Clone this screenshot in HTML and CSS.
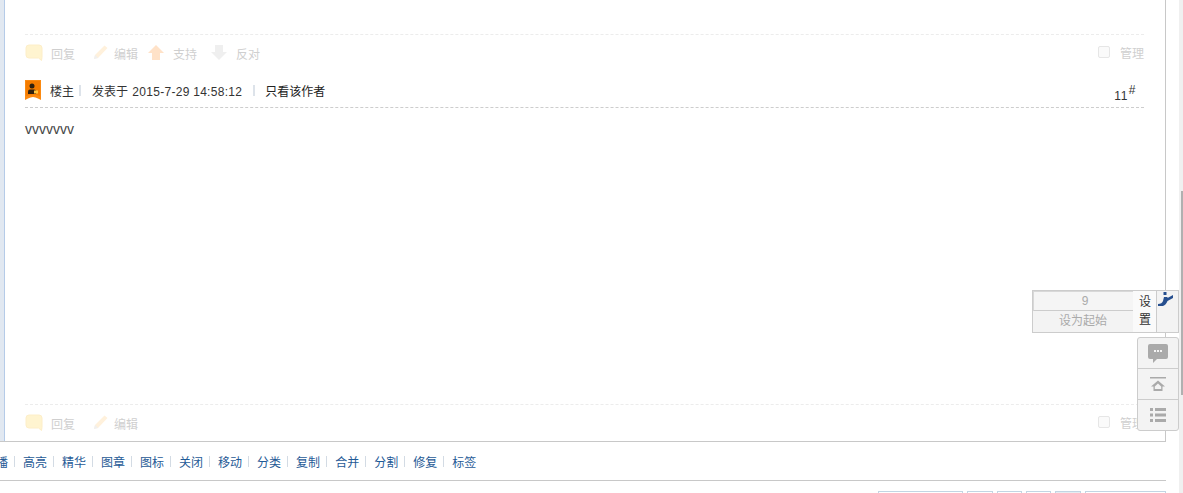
FILE: index.html
```html
<!DOCTYPE html>
<html lang="en">
<head>
    <meta charset="UTF-8">
    <title>帖子</title>
    <link rel="stylesheet" href="styles.css">
</head>
<body>
    <div class="thread">
        <div class="strip"></div>
        <div class="thread-main">
            <div class="post-foot first">
                <span class="act act-reply">
                    <svg class="ico" width="18" height="17" viewBox="0 0 18 17"><path d="M4 1h10a3 3 0 0 1 3 3v9.500l-.5 3-3-2.500H4a3 3 0 0 1-3-3V4a3 3 0 0 1 3-3z" fill="#fff4d0" stroke="#fdeec8"/></svg>
                    回复
                </span>
                <span class="act act-edit">
                    <svg class="ico" width="16" height="16" viewBox="0 0 16 16"><path d="M11.500 1.500l3 2.500L5 14l-4 1 1-4z" fill="#fff1dc"/><path d="M1 15l1-4 3 3z" fill="#f0f0f0"/></svg>
                    编辑
                </span>
                <span class="act act-up">
                    <svg class="ico" width="16" height="15" viewBox="0 0 16 15"><path d="M8 0l8 8h-4v7H4V8H0z" fill="#ffe2c8"/></svg>
                    支持
                </span>
                <span class="act act-down">
                    <svg class="ico" width="16" height="15" viewBox="0 0 16 15"><path d="M8 15l8-8h-4V0H4v7H0z" fill="#efefef"/></svg>
                    反对
                </span>
                <span class="manage"><i class="check"></i>管理</span>
            </div>

            <div class="post-head">
                <svg class="badge" width="16" height="20" viewBox="0 0 16 20">
                    <path d="M0 0h16v20l-3-1.500q-5-3-10 0L0 20z" fill="#fb8a12"/>
                    <path d="M1 1h14v15q-7-3-14 0z" fill="#f57c00"/>
                    <circle cx="7" cy="6" r="2.500" fill="#30200f"/>
                    <path d="M3 14v-2.500q0-2 2-2h4q2 0 2 2V14z" fill="#30200f"/>
                    <rect x="9" y="10.500" width="4" height="3" fill="#ffc640"/>
                </svg>
                <span class="author">楼主</span>
                <i class="pipe pipe-a"></i>
                <span class="posted">发表于 <span class="date">2015-7-29 14:58:12</span></span>
                <i class="pipe pipe-b"></i>
                <a class="only">只看该作者</a>
                <span class="floor">11<sup>#</sup></span>
            </div>

            <div class="post-body">vvvvvvv</div>

            <div class="post-foot">
                <span class="act act-reply">
                    <svg class="ico" width="18" height="17" viewBox="0 0 18 17"><path d="M4 1h10a3 3 0 0 1 3 3v9.500l-.5 3-3-2.500H4a3 3 0 0 1-3-3V4a3 3 0 0 1 3-3z" fill="#fff4d0" stroke="#fdeec8"/></svg>
                    回复
                </span>
                <span class="act act-edit">
                    <svg class="ico" width="16" height="16" viewBox="0 0 16 16"><path d="M11.500 1.500l3 2.500L5 14l-4 1 1-4z" fill="#fff1dc"/><path d="M1 15l1-4 3 3z" fill="#f0f0f0"/></svg>
                    编辑
                </span>
                <span class="manage"><i class="check"></i>管理</span>
            </div>
        </div>
    </div>

    <div class="mod-bar">
        <a>播</a><a>高亮</a><a>精华</a><a>图章</a><a>图标</a><a>关闭</a><a>移动</a><a>分类</a><a>复制</a><a>合并</a><a>分割</a><a>修复</a><a>标签</a>
    </div>

    <div class="pager">
        <span class="pg pg-1"></span>
        <span class="pg pg-2"></span>
        <span class="pg pg-3"></span>
        <span class="pg pg-3"></span>
        <span class="pg pg-2 current"></span>
        <span class="pg pg-4"></span>
    </div>

    <div class="tools">
        <div class="set-box">
            <div class="set-left">
                <div class="set-num">9</div>
                <div class="set-start">设为起始</div>
            </div>
            <div class="set-label">设<br>置</div>
            <div class="set-icon">
                <svg width="16" height="15" viewBox="0 0 16 15"><path d="M0 14v-2q4 0 5-3l1-4h3.500v1L15 3v3L9.500 9Q8 13 5 14z" fill="#264f8f"/><rect x="5.500" y="0" width="3" height="3" fill="#264f8f"/></svg>
            </div>
        </div>
        <div class="side-btns">
            <a class="side-btn">
                <svg width="20" height="19" viewBox="0 0 20 19"><path d="M2 0h16a2 2 0 0 1 2 2v11a2 2 0 0 1-2 2H9l-4 4v-4H2a2 2 0 0 1-2-2V2a2 2 0 0 1 2-2z" fill="#aaa"/><rect x="6" y="6" width="2" height="2" fill="#f3f3f3"/><rect x="9" y="6" width="2" height="2" fill="#f3f3f3"/><rect x="12" y="6" width="2" height="2" fill="#f3f3f3"/></svg>
            </a>
            <a class="side-btn">
                <svg width="16" height="14" viewBox="0 0 16 14"><rect x="0" y="0" width="16" height="1.500" fill="#aaa"/><path d="M8 3.500l7 6h-2.500V14h-9V9.500H1z" fill="#aaa"/><path d="M8 6.500l3.200 3v2.500H4.800V9.500z" fill="#f3f3f3"/></svg>
            </a>
            <a class="side-btn">
                <svg width="16" height="14" viewBox="0 0 16 14"><g fill="#aaa"><rect x="0" y="0" width="3" height="3"/><rect x="5" y="0" width="11" height="3"/><rect x="0" y="5.500" width="3" height="3"/><rect x="5" y="5.500" width="11" height="3"/><rect x="0" y="11" width="3" height="3"/><rect x="5" y="11" width="11" height="3"/></g></svg>
            </a>
        </div>
    </div>

    <div class="scroll-track"><div class="scroll-thumb"></div></div>
</body>
</html>
```

FILE: styles.css
```css
html, body{
    margin: 0;
    padding: 0;
    height: 493px;
    overflow: hidden;
    background-color: #fff;
}
body{
    position: relative;
    font-family: "Liberation Sans", "Noto Sans CJK SC", sans-serif;
    font-size: 12px;
    color: #444;
}
.thread{
    display: flex;
    width: 1166px;
    height: 442px;
    box-sizing: border-box;
    border-right: 1px solid #c8c8c8;
    border-bottom: 1px solid #c8c8c8;
}
.strip{
    width: 4px;
    background-color: #e1e8f1;
    border-right: 1px solid #b5cbe8;
}
.thread-main{
    flex: 1;
    padding: 34px 20px 0 20px;
    min-width: 0;
}
.post-foot{
    display: flex;
    align-items: center;
    height: 36px;
    margin-right: 1px;
    border-top: 1px dashed #ececec;
    color: #cfcfcf;
}
.post-foot.first{
    margin-bottom: 2px;
}
.act{
    display: flex;
    align-items: center;
}
.ico{
    margin-top: -2px;
}
.act-reply{
    width: 68px;
    gap: 8px;
}
.act-edit{
    width: 55px;
    gap: 5px;
}
.act-up{
    width: 63px;
    gap: 9px;
}
.act-down{
    gap: 9px;
}
.manage{
    display: flex;
    align-items: center;
    margin-left: auto;
    margin-top: -2px;
}
.check{
    width: 10px;
    height: 10px;
    margin-right: 10px;
    border: 1px solid #e6e6e6;
    border-radius: 2px;
    background-color: #fafafa;
}
.post-head{
    display: flex;
    align-items: center;
    height: 34px;
    margin-right: 1px;
    border-bottom: 1px dashed #cdcdcd;
    color: #333;
}
.badge{
    margin-right: 9px;
}
.pipe{
    width: 2px;
    height: 11px;
    background-color: #dde3ea;
}
.pipe-a{
    margin: 0 11px 0 5px;
}
.pipe-b{
    margin: 0 10px 0 11px;
}
.date{
    margin-left: 1px;
    letter-spacing: .28px;
}
.only{
    color: #222;
}
.floor{
    margin-left: auto;
    margin-right: 8px;
    padding-top: 11px;
    letter-spacing: .5px;
    color: #333;
}
.floor sup{
    position: relative;
    top: 1px;
    margin-left: 1px;
    font-size: 12px;
    line-height: 0;
    vertical-align: top;
}
.post-body{
    height: 283px;
    padding-top: 13px;
    font-size: 14px;
    line-height: 16px;
    color: #444;
}
.mod-bar{
    display: flex;
    align-items: center;
    width: 1170px;
    height: 38px;
    margin-left: -4px;
    border-bottom: 1px solid #c8c8c8;
    color: #1f5a96;
}
.mod-bar a{
    padding: 0 7px 0 8px;
    background: linear-gradient(#d3dbe4, #d3dbe4) right center / 1px 11px no-repeat;
}
.mod-bar a:first-child{
    width: 12px;
    padding-left: 0;
}
.mod-bar a:last-child{
    background: none;
}
.pager{
    display: flex;
    justify-content: flex-end;
    gap: 4px;
    width: 1166px;
    margin-top: 10px;
}
.pg{
    height: 30px;
    box-sizing: border-box;
    border: 1px solid #c2d5e3;
}
.pg-1{
    width: 85px;
}
.pg-2{
    width: 26px;
}
.pg-3{
    width: 25px;
}
.pg-4{
    width: 81px;
}
.current{
    background-color: #e5edf2;
}
.tools{
    position: absolute;
    top: 290px;
    right: 4px;
    display: flex;
    flex-direction: column;
    align-items: flex-end;
    gap: 4px;
}
.set-box{
    display: flex;
    width: 147px;
    height: 43px;
    box-sizing: border-box;
    border: 1px solid #ccc;
    background-color: #f3f3f3;
}
.set-left{
    width: 100px;
    color: #aaa;
    text-align: center;
}
.set-num{
    height: 18px;
    padding-left: 3px;
    line-height: 19px;
    border-top: 1px solid #d8d8d8;
    border-left: 1px solid #d8d8d8;
    border-bottom: 1px solid #ccc;
    background-color: #f5f5f5;
}
.set-start{
    height: 21px;
    line-height: 21px;
}
.set-label{
    width: 22px;
    padding: 2px 0 0 1px;
    line-height: 18px;
    text-align: center;
    color: #333;
    background-color: #fafafa;
}
.set-icon{
    flex: 1;
    padding: 1px 0 0 1px;
    border-left: 1px solid #ccc;
}
.side-btns{
    width: 42px;
    box-sizing: border-box;
    border: 1px solid #ccc;
    border-radius: 3px;
    background-color: #f3f3f3;
}
.side-btn{
    display: flex;
    align-items: center;
    justify-content: center;
    height: 30px;
    border-bottom: 1px solid #ccc;
}
.side-btn:last-child{
    border-bottom: none;
}
.scroll-track{
    position: absolute;
    top: 0;
    right: 0;
    width: 4px;
    height: 493px;
    background-color: #f0f0f0;
}
.scroll-thumb{
    width: 2px;
    height: 204px;
    margin: 191px 0 0 2px;
    background-color: #b0b0b0;
}
```
